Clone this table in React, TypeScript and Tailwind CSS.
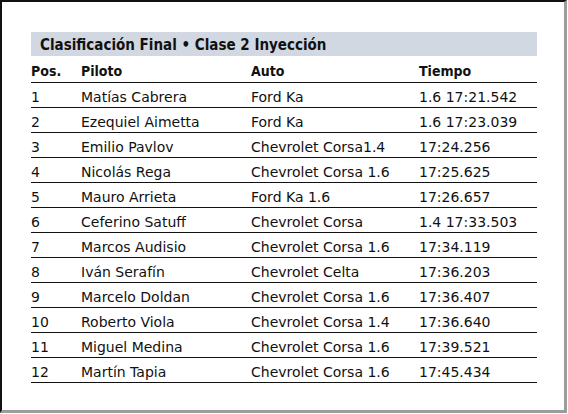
const rows = [
  ["1", "Matías Cabrera", "Ford Ka", "1.6 17:21.542"],
  ["2", "Ezequiel Aimetta", "Ford Ka", "1.6 17:23.039"],
  ["3", "Emilio Pavlov", "Chevrolet Corsa1.4", "17:24.256"],
  ["4", "Nicolás Rega", "Chevrolet Corsa 1.6", "17:25.625"],
  ["5", "Mauro Arrieta", "Ford Ka 1.6", "17:26.657"],
  ["6", "Ceferino Satuff", "Chevrolet Corsa", "1.4 17:33.503"],
  ["7", "Marcos Audisio", "Chevrolet Corsa 1.6", "17:34.119"],
  ["8", "Iván Serafín", "Chevrolet Celta", "17:36.203"],
  ["9", "Marcelo Doldan", "Chevrolet Corsa 1.6", "17:36.407"],
  ["10", "Roberto Viola", "Chevrolet Corsa 1.4", "17:36.640"],
  ["11", "Miguel Medina", "Chevrolet Corsa 1.6", "17:39.521"],
  ["12", "Martín Tapia", "Chevrolet Corsa 1.6", "17:45.434"],
];

const cols = "grid grid-cols-[50px_170px_168px_1fr]";

export default function App() {
  return (
    <div className="w-[568px] h-[414px] bg-white font-['DejaVu_Sans',sans-serif] text-[#111]">
      <div className="w-[567px] h-[413px] border-l-2 border-t-2 border-l-[#111] border-t-[#111] border-r-[3px] border-b-[3px] border-r-[#9c9c9c] border-b-[#9c9c9c] pl-[29px] pt-[30px]">
        <div className="w-[506px]">
          <div className="h-[24px] bg-[#d1d8e2] pl-[9px] text-[15px] leading-[27px] font-bold font-stretch-condensed font-['DejaVu_Sans_Condensed','DejaVu_Sans',sans-serif]">
            Clasificación Final • Clase 2 Inyección
          </div>
          <div className={`${cols} h-[27px] border-b border-[#111] text-[14px] leading-[30px] font-bold font-stretch-condensed font-['DejaVu_Sans_Condensed','DejaVu_Sans',sans-serif]`}>
            <div>Pos.</div>
            <div>Piloto</div>
            <div>Auto</div>
            <div>Tiempo</div>
          </div>
          {rows.map((r) => (
            <div key={r[0]} className={`${cols} h-[25px] border-b border-[#111] text-[14px] leading-[28px]`}>
              <div>{r[0]}</div>
              <div>{r[1]}</div>
              <div>{r[2]}</div>
              <div>{r[3]}</div>
            </div>
          ))}
        </div>
      </div>
    </div>
  );
}
